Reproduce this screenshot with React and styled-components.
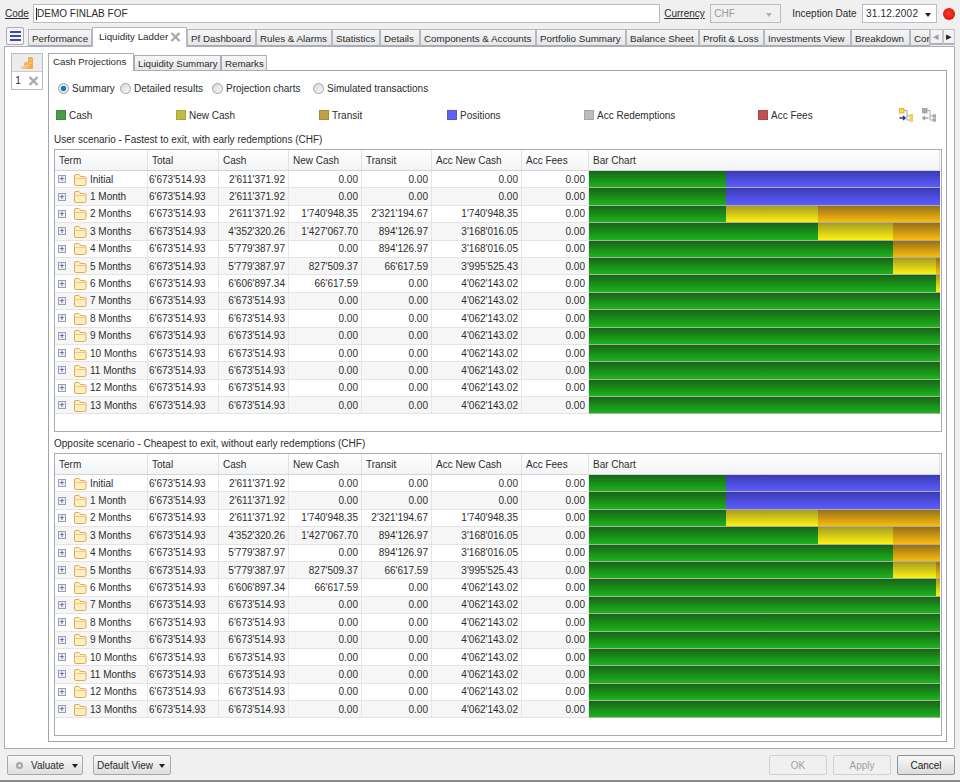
import React from "react";
import styled, { createGlobalStyle } from "styled-components";

const TOTAL = "6'673'514.93";

const ROWS = [
    ["Initial", "2'611'371.92", "0.00", "0.00", "0.00"],
    ["1 Month", "2'611'371.92", "0.00", "0.00", "0.00"],
    ["2 Months", "2'611'371.92", "1'740'948.35", "2'321'194.67", "1'740'948.35"],
    ["3 Months", "4'352'320.26", "1'427'067.70", "894'126.97", "3'168'016.05"],
    ["4 Months", "5'779'387.97", "0.00", "894'126.97", "3'168'016.05"],
    ["5 Months", "5'779'387.97", "827'509.37", "66'617.59", "3'995'525.43"],
    ["6 Months", "6'606'897.34", "66'617.59", "0.00", "4'062'143.02"],
    ["7 Months", TOTAL, "0.00", "0.00", "4'062'143.02"],
    ["8 Months", TOTAL, "0.00", "0.00", "4'062'143.02"],
    ["9 Months", TOTAL, "0.00", "0.00", "4'062'143.02"],
    ["10 Months", TOTAL, "0.00", "0.00", "4'062'143.02"],
    ["11 Months", TOTAL, "0.00", "0.00", "4'062'143.02"],
    ["12 Months", TOTAL, "0.00", "0.00", "4'062'143.02"],
    ["13 Months", TOTAL, "0.00", "0.00", "4'062'143.02"],
];

const MAIN_TABS = [
    ["Performance", 64],
    ["Liquidity Ladder", 95, true],
    ["Pf Dashboard", 69],
    ["Rules & Alarms", 76],
    ["Statistics", 48],
    ["Details", 40],
    ["Components & Accounts", 116],
    ["Portfolio Summary", 90],
    ["Balance Sheet", 73],
    ["Profit & Loss", 65],
    ["Investments View", 87],
    ["Breakdown", 59],
    ["Cor", 20],
];

const LEGEND = [
    ["Cash", "#4a9a4a", 120],
    ["New Cash", "#c2bc42", 143],
    ["Transit", "#c0a040", 128],
    ["Positions", "#6262f2", 137],
    ["Acc Redemptions", "#bcbcbc", 174],
    ["Acc Fees", "#c25252", 130],
];

const parse = (s) => Number(s.replace(/'/g, ""));
const percent = (s) => (parse(s) / parse(TOTAL)) * 100;

const GlobalStyle = createGlobalStyle`
    html, body {
        margin: 0;
        padding: 0;
        background: #f0f0f0;
    }
    * {
        box-sizing: border-box;
    }
`;

function FolderIcon() {
    return (
        <svg width="14" height="13" viewBox="0 0 14 13">
            <path
                d="M1.5 11 V3 Q1.5 1.5 3 1.5 H5.5 Q6.5 1.5 7 2.5 L7.5 3.5 H11.5 Q13 3.5 13 5 V11 Q13 12.5 11.5 12.5 H3 Q1.5 12.5 1.5 11 Z"
                fill="#fdeec4"
                stroke="#e2aa50"
            />
            <path d="M2.5 5.5 H12" stroke="#f0c878" />
        </svg>
    );
}

function CloseIcon() {
    return (
        <svg width="11" height="10" viewBox="0 0 11 10">
            <path d="M1.5 1 L9.5 9 M9.5 1 L1.5 9" stroke="#a8a8a8" strokeWidth="2.4" />
        </svg>
    );
}

function CoinsIcon() {
    return (
        <svg width="14" height="14" viewBox="0 0 14 14">
            <rect x="8" y="1" width="5" height="12" rx="1.5" fill="#eeaa48" />
            <rect x="4" y="6" width="6" height="7" rx="1.5" fill="#f2b458" />
            <rect x="1" y="10" width="6" height="3" rx="1.5" fill="#f6c680" />
            <path d="M9 4 H12 M9 7 H12 M5 9.5 H9" stroke="#f8d49c" />
        </svg>
    );
}

function TreeIcon({ active, back }) {
    const box = active ? "#ffd83a" : "#a9a9a9";
    const edge = active ? "#e0b040" : "#a9a9a9";
    const arrow = active ? "#2c3288" : "#a0a0a0";
    return (
        <svg width="14" height="14" viewBox="0 0 14 14">
            <rect x="0.5" y="0.5" width="4.5" height="4.5" fill={box} stroke={edge} />
            <path d="M5 2.5 H8 V12 M8 8 H11 M8 12 H11" stroke="#a4a4a4" fill="none" />
            <rect x="11" y="6.5" width="3" height="3" fill={box} stroke={edge} strokeWidth="0.5" />
            <rect x="11" y="10.5" width="3" height="3" fill={box} stroke={edge} strokeWidth="0.5" />
            {back ? (
                <path d="M6.5 10 H1 M3 8 L0.8 10 L3 12" stroke={arrow} strokeWidth="1.3" fill="none" />
            ) : (
                <path d="M0.5 10 H6 M4 8 L6.2 10 L4 12" stroke={arrow} strokeWidth="1.3" fill="none" />
            )}
        </svg>
    );
}

function BarChart({ row }) {
    const segments = [
        ["cash", percent(row[1])],
        ["newCash", percent(row[2])],
        ["transit", percent(row[3])],
    ];
    const used = segments.reduce((sum, s) => sum + s[1], 0);
    if (used < 99) segments.push(["positions", 100 - used]);

    return (
        <Bar>
            {segments
                .filter((s) => s[1] > 0)
                .map((s) => (
                    <Segment key={s[0]} $kind={s[0]} style={{ width: s[1] + "%" }} />
                ))}
        </Bar>
    );
}

function LadderTable({ height }) {
    return (
        <Table $height={height}>
            <HeaderRow>
                <HeaderCell>Term</HeaderCell>
                <HeaderCell>Total</HeaderCell>
                <HeaderCell>Cash</HeaderCell>
                <HeaderCell>New Cash</HeaderCell>
                <HeaderCell>Transit</HeaderCell>
                <HeaderCell>Acc New Cash</HeaderCell>
                <HeaderCell>Acc Fees</HeaderCell>
                <HeaderCell>Bar Chart</HeaderCell>
            </HeaderRow>
            {ROWS.map((row, index) => (
                <Row key={row[0]} $odd={index % 2 === 1}>
                    <TermCell>
                        <Expander>+</Expander>
                        <FolderIcon />
                        <TermLabel>{row[0]}</TermLabel>
                    </TermCell>
                    <Cell>{TOTAL}</Cell>
                    <Cell $right>{row[1]}</Cell>
                    <Cell $right>{row[2]}</Cell>
                    <Cell $right>{row[3]}</Cell>
                    <Cell $right>{row[4]}</Cell>
                    <Cell $right>0.00</Cell>
                    <BarChart row={row} />
                </Row>
            ))}
        </Table>
    );
}

function App() {
    return (
        <Page>
            <GlobalStyle />
            <TopBar>
                <LinkLabel $width={28}>Code</LinkLabel>
                <CodeInput>
                    <TextCursor />
                    DEMO FINLAB FOF
                </CodeInput>
                <LinkLabel $width={46}>Currency</LinkLabel>
                <CurrencySelect>
                    CHF
                    <Caret $muted />
                </CurrencySelect>
                <DateLabel>Inception Date</DateLabel>
                <DateField>
                    31.12.2002
                    <Caret />
                </DateField>
                <Led />
            </TopBar>

            <TabStrip>
                <MenuButton>
                    <MenuLine />
                    <MenuLine />
                    <MenuLine />
                </MenuButton>
                <TabScroller>
                    {MAIN_TABS.map(([label, width, active]) => (
                        <MainTab key={label} $width={width} $active={active}>
                            {label}
                            {active && <CloseIcon />}
                        </MainTab>
                    ))}
                </TabScroller>
                <ScrollButtons>
                    <ScrollButton $disabled>◂</ScrollButton>
                    <ScrollButton>▸</ScrollButton>
                </ScrollButtons>
            </TabStrip>

            <MainPanel>
                <SideTabs>
                    <SideTab>
                        <CoinsIcon />
                    </SideTab>
                    <SideTab>
                        1 <CloseIcon />
                    </SideTab>
                </SideTabs>
                <Content>
                    <SubTabs>
                        <SubTab $width={86} $active>Cash Projections</SubTab>
                        <SubTab $width={87}>Liquidity Summary</SubTab>
                        <SubTab $width={46}>Remarks</SubTab>
                    </SubTabs>
                    <InnerPanel>
                        <RadioRow>
                            <RadioItem $width={62}>
                                <Radio $checked />
                                Summary
                            </RadioItem>
                            <RadioItem $width={92}>
                                <Radio />
                                Detailed results
                            </RadioItem>
                            <RadioItem $width={101}>
                                <Radio />
                                Projection charts
                            </RadioItem>
                            <RadioItem $width={120}>
                                <Radio />
                                Simulated transactions
                            </RadioItem>
                        </RadioRow>
                        <LegendRow>
                            {LEGEND.map(([label, color, width]) => (
                                <LegendItem key={label} $width={width}>
                                    <Swatch $color={color} />
                                    {label}
                                </LegendItem>
                            ))}
                            <TreeButtons>
                                <TreeIcon active />
                                <TreeIcon back />
                            </TreeButtons>
                        </LegendRow>
                        <SectionTitle $top={10}>
                            User scenario - Fastest to exit, with early redemptions (CHF)
                        </SectionTitle>
                        <LadderTable height={283} />
                        <SectionTitle $top={5}>
                            Opposite scenario - Cheapest to exit, without early redemptions (CHF)
                        </SectionTitle>
                        <LadderTable height={283} />
                    </InnerPanel>
                </Content>
            </MainPanel>

            <Footer>
                <ValuateButton>
                    <GearDot />
                    Valuate
                    <Caret />
                </ValuateButton>
                <ViewButton>
                    Default View
                    <Caret />
                </ViewButton>
                <Spacer />
                <DialogButton disabled>OK</DialogButton>
                <DialogButton disabled>Apply</DialogButton>
                <DialogButton>Cancel</DialogButton>
            </Footer>
        </Page>
    );
}

const Page = styled.div`
    width: 960px;
    height: 782px;
    display: flex;
    flex-direction: column;
    overflow: hidden;
    background: #f0f0f0;
    border-bottom: 2px solid #8a8a8a;
    font-family: "Liberation Sans", Arial, sans-serif;
    font-size: 10px;
    color: #2c2c2c;
`;

const TopBar = styled.div`
    height: 27px;
    padding: 4px 5px 4px 5px;
    display: flex;
    align-items: center;
`;

const LinkLabel = styled.span`
    flex: none;
    width: ${(props) => props.$width}px;
    text-decoration: underline;
`;

const FieldBox = styled.div`
    height: 19px;
    display: flex;
    align-items: center;
    background: #fff;
    border: 1px solid #b8bcc4;
    padding: 0 3px;
`;

const CodeInput = styled(FieldBox)`
    width: 628px;
    margin-right: 4px;
    padding-left: 2px;
`;

const TextCursor = styled.i`
    width: 1px;
    height: 12px;
    background: #222;
`;

const CurrencySelect = styled(FieldBox)`
    width: 71px;
    justify-content: space-between;
    background: #f0f0f0;
    color: #9a9a9a;
    padding-right: 8px;
`;

const DateLabel = styled.span`
    margin-left: 11px;
    margin-right: 5px;
    width: 65px;
    white-space: nowrap;
`;

const DateField = styled(FieldBox)`
    width: 75px;
    justify-content: space-between;
    padding-right: 5px;
    letter-spacing: 0.2px;
`;

const Caret = styled.i`
    width: 0;
    height: 0;
    border-left: 3px solid transparent;
    border-right: 3px solid transparent;
    border-top: 4px solid ${(props) => (props.$muted ? "#b0b0b0" : "#222")};
    margin-top: 2px;
`;

const Led = styled.div`
    width: 12px;
    height: 12px;
    margin-left: 6px;
    border-radius: 50%;
    background: radial-gradient(circle at 50% 45%, #ff3a20, #d81a10 70%, #a83a30);
`;

const TabStrip = styled.div`
    height: 19px;
    padding-left: 6px;
    padding-right: 5px;
    display: flex;
    align-items: flex-end;
    position: relative;
    z-index: 1;
`;

const MenuButton = styled.div`
    width: 18px;
    height: 18px;
    margin-right: 4px;
    margin-bottom: 1px;
    border: 1px solid #a8acb4;
    border-radius: 2px;
    background: #f4f4f4;
    display: flex;
    flex-direction: column;
    justify-content: center;
    align-items: center;
    gap: 2px;
`;

const MenuLine = styled.i`
    width: 11px;
    height: 2px;
    background: #3a4ea8;
`;

const TabScroller = styled.div`
    flex: 1;
    min-width: 0;
    height: 20px;
    margin-bottom: -1px;
    display: flex;
    align-items: flex-end;
    overflow: hidden;
`;

const MainTab = styled.div`
    flex: none;
    width: ${(props) => props.$width}px;
    height: ${(props) => (props.$active ? "20px" : "18px")};
    padding: ${(props) => (props.$active ? "0 5px 2px 6px" : "1px 0 0 3px")};
    display: flex;
    align-items: center;
    justify-content: space-between;
    font-size: 9.8px;
    white-space: nowrap;
    overflow: hidden;
    background: ${(props) => (props.$active ? "#fff" : "linear-gradient(#f6f6f6, #e6e6e6)")};
    border: 1px solid #b4b8c0;
    border-bottom: ${(props) => (props.$active ? "none" : "2px solid #a9adb6")};
`;

const ScrollButtons = styled.div`
    display: flex;
    flex: none;
    height: 17px;
    width: 25px;
`;

const ScrollButton = styled.div`
    width: 13px;
    height: 16px;
    border: 1px solid #c4c4c4;
    border-bottom: 2px solid #b0b0b0;
    background: #f2f2f2;
    display: flex;
    align-items: center;
    justify-content: center;
    font-size: 11px;
    color: ${(props) => (props.$disabled ? "#a0a0a0" : "#222")};
`;

const MainPanel = styled.div`
    width: 951px;
    height: 703px;
    margin-left: 4px;
    padding: 6px;
    display: flex;
    gap: 5px;
    background: #fff;
    border: 1px solid #a9adb6;
`;

const SideTabs = styled.div`
    flex: none;
    width: 32px;
    height: 37px;
    display: flex;
    flex-direction: column;
    border: 1px solid #b8bcc4;
`;

const SideTab = styled.div`
    flex: 1;
    display: flex;
    align-items: center;
    justify-content: center;
    gap: 7px;
    & + & {
        border-top: 1px solid #c8cbd0;
        background: #fff;
    }
    &:first-child {
        background: #ececec;
    }
`;

const Content = styled.div`
    width: 899px;
    display: flex;
    flex-direction: column;
`;

const SubTabs = styled.div`
    height: 18px;
    display: flex;
    align-items: flex-end;
    position: relative;
    z-index: 1;
    margin-bottom: -1px;
`;

const SubTab = styled.div`
    width: ${(props) => props.$width}px;
    height: ${(props) => (props.$active ? "18px" : "16px")};
    padding: ${(props) => (props.$active ? "0 0 2px 4px" : "1px 0 0 3px")};
    display: flex;
    align-items: center;
    font-size: 9.7px;
    white-space: nowrap;
    background: ${(props) => (props.$active ? "#fff" : "linear-gradient(#f6f6f6, #e6e6e6)")};
    border: 1px solid #a9adb6;
    border-bottom: ${(props) => (props.$active ? "none" : "1px solid #a9adb6")};
`;

const InnerPanel = styled.div`
    flex: 1;
    padding: 0 5px 5px 5px;
    background: #fff;
    border: 1px solid #a0a4ac;
`;

const RadioRow = styled.div`
    height: 18px;
    margin-top: 8px;
    padding-left: 4px;
    display: flex;
    align-items: center;
`;

const RadioItem = styled.label`
    width: ${(props) => props.$width}px;
    display: flex;
    align-items: center;
    gap: 3px;
    white-space: nowrap;
`;

const Radio = styled.i`
    flex: none;
    width: 11px;
    height: 11px;
    border-radius: 50%;
    border: 1px solid #a0a0a0;
    background: ${(props) =>
        props.$checked
            ? "radial-gradient(circle, #1a78b8 0 2.5px, #dfe8f0 3px)"
            : "linear-gradient(135deg, #d8d8d8, #f8f8f8)"};
`;

const LegendRow = styled.div`
    height: 16px;
    margin-top: 10px;
    padding-left: 2px;
    display: flex;
    align-items: center;
`;

const LegendItem = styled.div`
    width: ${(props) => props.$width}px;
    display: flex;
    align-items: center;
    gap: 3px;
    white-space: nowrap;
`;

const Swatch = styled.i`
    width: 10px;
    height: 10px;
    background: ${(props) => props.$color};
    border: 1px solid rgba(0, 0, 0, 0.12);
`;

const TreeButtons = styled.div`
    margin-left: auto;
    margin-right: 5px;
    display: flex;
    gap: 9px;
`;

const SectionTitle = styled.div`
    height: 14px;
    margin-top: ${(props) => props.$top}px;
    margin-bottom: 2px;
    line-height: 14px;
    white-space: nowrap;
`;

const Table = styled.div`
    width: 888px;
    height: ${(props) => props.$height}px;
    border: 1px solid #a8acb4;
    background: #fff;
`;

const COLUMNS = "93px 71px 70px 73px 70px 90px 67px 351px";

const HeaderRow = styled.div`
    height: 21px;
    display: grid;
    grid-template-columns: ${COLUMNS};
    background: linear-gradient(#ffffff, #f3f4f6);
    border-bottom: 1px solid #d4d4d4;
`;

const HeaderCell = styled.div`
    padding-left: 4px;
    display: flex;
    align-items: center;
    border-right: 1px solid #e2e2e2;
`;

const Row = styled.div`
    height: 17.4px;
    display: grid;
    grid-template-columns: ${COLUMNS};
    background: ${(props) => (props.$odd ? "#f6f6f6" : "#fff")};
    border-bottom: 1px solid #e4e4e4;
`;

const Cell = styled.div`
    padding: 0 ${(props) => (props.$right ? "3px" : "0")} 0 ${(props) => (props.$right ? "0" : "1px")};
    display: flex;
    align-items: center;
    justify-content: ${(props) => (props.$right ? "flex-end" : "flex-start")};
    border-right: 1px solid #e6e6e6;
    white-space: nowrap;
`;

const TermCell = styled(Cell)`
    padding-left: 3px;
`;

const Expander = styled.i`
    flex: none;
    width: 8px;
    height: 8px;
    margin-right: 7px;
    border: 1px solid #9aa0b4;
    background: #eef0f6;
    color: #2a2f80;
    font-style: normal;
    font-size: 9px;
    line-height: 6px;
    text-align: center;
`;

const TermLabel = styled.span`
    margin-left: 3px;
`;

const Bar = styled.div`
    display: flex;
    height: 100%;
    box-shadow: 0 1px 0 #aeaea6;
`;

const BAR_COLORS = {
    cash: "#186418, #1bb41b",
    newCash: "#a49c20, #fff212",
    transit: "#987018, #f8bc10",
    positions: "#3a3ab4, #5c5cff",
};

const Segment = styled.div`
    height: 100%;
    background: linear-gradient(${(props) => BAR_COLORS[props.$kind]});
`;

const Footer = styled.div`
    flex: 1;
    padding: 6px 5px 5px 7px;
    display: flex;
    align-items: flex-start;
`;

const ToolButton = styled.div`
    height: 20px;
    display: flex;
    align-items: center;
    border: 1px solid #a8a8a8;
    border-radius: 2px;
    background: linear-gradient(#f8f8f8, #dedede);
    white-space: nowrap;
`;

const ValuateButton = styled(ToolButton)`
    width: 76px;
    padding: 0 5px 0 8px;
    gap: 8px;
    & > i:last-child {
        margin-left: auto;
    }
`;

const GearDot = styled.i`
    flex: none;
    width: 7px;
    height: 7px;
    border-radius: 50%;
    border: 2px solid #a4a4a4;
`;

const ViewButton = styled(ToolButton)`
    width: 78px;
    margin-left: 10px;
    padding: 0 5px 0 3px;
    justify-content: space-between;
`;

const Spacer = styled.div`
    flex: 1;
`;

const DialogButton = styled.button`
    width: 58px;
    height: 20px;
    margin-left: 6px;
    padding: 0;
    font: inherit;
    color: ${(props) => (props.disabled ? "#a0a0a0" : "#222")};
    border: 1px solid ${(props) => (props.disabled ? "#d0d0d0" : "#909090")};
    border-radius: 2px;
    background: ${(props) => (props.disabled ? "#f0f0f0" : "linear-gradient(#f8f8f8, #dcdcdc)")};
`;

export default App;
